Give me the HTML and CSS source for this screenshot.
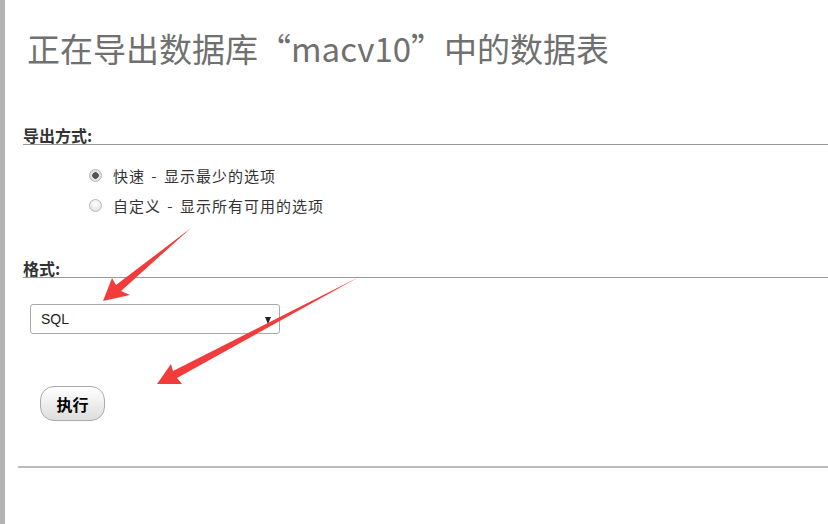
FILE: index.html
```html
<!DOCTYPE html>
<html lang="zh-CN">
<head>
    <meta charset="UTF-8">
    <meta name="viewport" content="width=device-width, initial-scale=1.0">
    <title>导出数据表</title>
    <link rel="stylesheet" href="styles.css">
</head>
<body>
    <div class="page">
        <h1 class="page-title">正在导出数据库“macv10”中的数据表</h1>

        <div class="section">
            <h3>导出方式:</h3>
            <ul class="options">
                <li>
                    <label><input type="radio" name="quick_or_custom" checked> 快速 - 显示最少的选项</label>
                </li>
                <li>
                    <label><input type="radio" name="quick_or_custom"> 自定义 - 显示所有可用的选项</label>
                </li>
            </ul>
        </div>

        <div class="section">
            <h3 class="format-title">格式:</h3>
            <div class="select-wrap">
                <select class="format-select">
                    <option>SQL</option>
                </select>
            </div>
        </div>

        <div class="section">
            <button class="go-button">执行</button>
        </div>

        <hr class="bottom-line">

        <!-- annotation arrows drawn over the page -->
        <svg class="arrows" width="828" height="524" viewBox="0 0 828 524">
            <polygon points="191,228 121,291 130,295 103,301 112,278 116,285" fill="#f23c3c"/>
            <polygon points="359,277 177,378 182,384 157,384 171,364 173,371" fill="#f23c3c"/>
        </svg>
    </div>
</body>
</html>
```

FILE: styles.css
```css
body {
    margin: 0;
    padding: 0;
    background-color: #ffffff;
    color: #333333;
    font-family: "Noto Sans CJK SC", "Liberation Sans", sans-serif;
}

.page {
    position: relative;
    min-height: 100vh;
    border-left: 5px solid #b4b4b4;
    padding: 29px 0 0 13px;
    box-sizing: border-box;
}

.page-title {
    margin: 0 0 0 9px;
    font-size: 33px;
    font-weight: normal;
    line-height: 38px;
    color: #707070;
}

.section {
    margin-left: 5px;
}

h3 {
    margin: 59px 0 0 0;
    font-size: 16px;
    font-weight: bold;
    line-height: 18px;
    color: #333333;
    border-bottom: 1px solid #999999;
}

.format-title {
    margin-top: 39px;
}

.options {
    list-style: none;
    margin: 15px 0 0 0;
    padding: 0 0 0 66px;
}

.options li {
    height: 30px;
    display: flex;
    align-items: center;
    font-size: 15px;
    letter-spacing: 1px;
    word-spacing: 2px;
    color: #333333;
}

.options label {
    display: flex;
    align-items: center;
    gap: 11px;
}

.options input {
    appearance: none;
    -webkit-appearance: none;
    width: 13px;
    height: 13px;
    margin: 0;
    border: 1px solid #b8b8b8;
    border-radius: 50%;
    background: radial-gradient(circle at 50% 35%, #ffffff, #dcdcdc);
    box-sizing: border-box;
}

.options input:checked {
    background: radial-gradient(circle, #555555 0, #555555 3px, #e8e8e8 3.5px, #d6d6d6);
}

.select-wrap {
    position: relative;
    width: 250px;
    margin: 26px 0 0 7px;
}

.format-select {
    appearance: none;
    -webkit-appearance: none;
    width: 250px;
    height: 30px;
    padding: 0 0 0 10px;
    border: 1px solid #aaaaaa;
    border-radius: 3px;
    background-color: #ffffff;
    color: #222222;
    font-family: "Liberation Sans", sans-serif;
    font-size: 14px;
}

.select-wrap::after {
    content: "";
    position: absolute;
    right: 9px;
    top: 13px;
    border-left: 3.5px solid transparent;
    border-right: 3.5px solid transparent;
    border-top: 7px solid #222222;
}

.go-button {
    margin: 52px 0 0 17px;
    width: 65px;
    height: 35px;
    border: 1px solid #aaaaaa;
    border-radius: 14px;
    background: linear-gradient(#ffffff, #dddddd);
    color: #000000;
    font-family: "Noto Sans CJK SC", sans-serif;
    font-size: 16px;
    font-weight: bold;
    cursor: pointer;
}

.bottom-line {
    margin: 45px 0 0 0;
    border: none;
    border-top: 2px solid #bcbcbc;
}

.arrows {
    position: absolute;
    left: -5px;
    top: 0;
    pointer-events: none;
}
```
